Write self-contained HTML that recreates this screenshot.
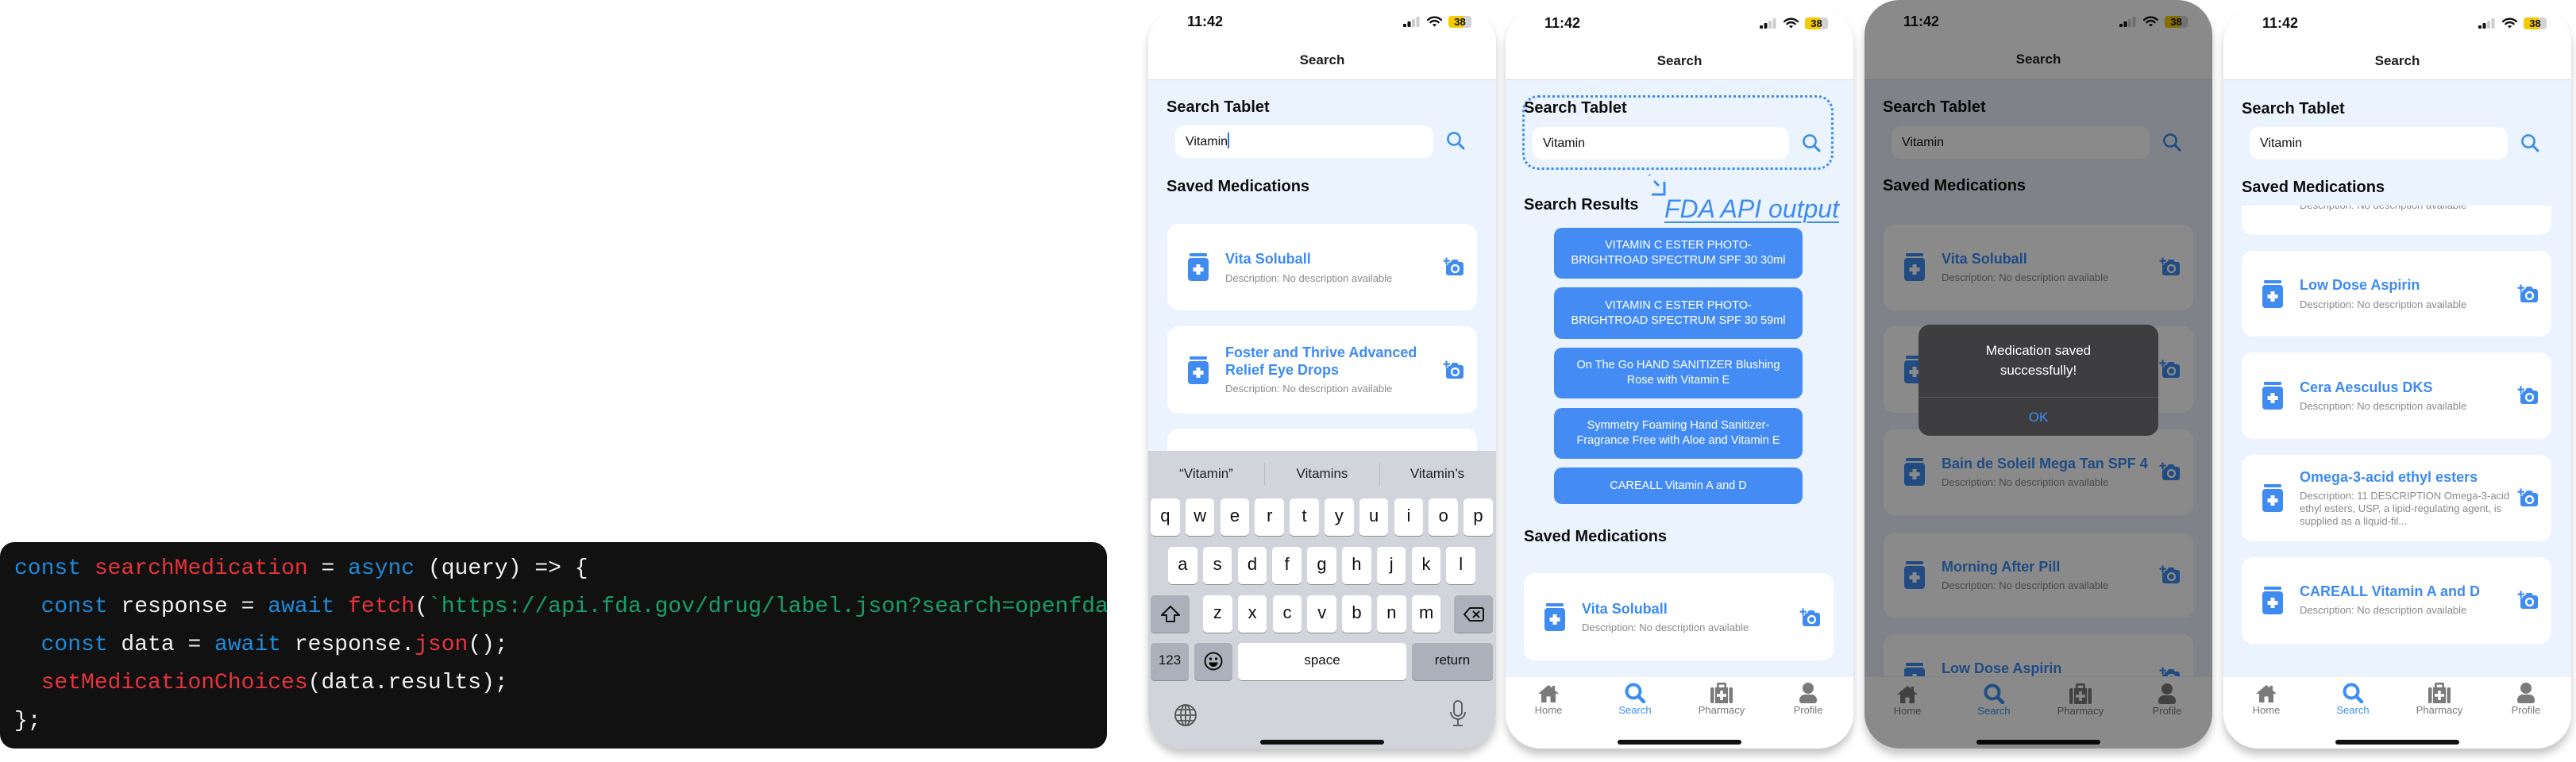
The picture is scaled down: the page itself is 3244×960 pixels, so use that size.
<!DOCTYPE html>
<html><head><meta charset="utf-8"><style>
*{margin:0;padding:0;box-sizing:border-box}
body{width:3244px;height:960px;background:#fff;position:relative;overflow:hidden;font-family:"Liberation Sans",sans-serif}
.code{position:absolute;left:0;top:683px;width:1394px;height:260px;background:#111;border-radius:18px;overflow:hidden;font-family:"Liberation Mono",monospace;font-size:28px;color:#f0f0f0;white-space:pre}
.code div{position:absolute;left:18px;height:48px;line-height:48px}
.k{color:#1f8ad8}.r{color:#e8333d}.g{color:#18a06a}
.ph{position:absolute;top:10px;width:438px;height:933px;border-radius:44px;overflow:hidden;background:#ebf3fe;box-shadow:0 8px 10px rgba(0,0,0,.22)}
.ph>*,.ab>*{position:absolute}
.hdr{left:0;top:0;width:438px;height:91px;background:#fff;border-bottom:1px solid #d9dee6}
.time{left:49px;font-weight:bold;font-size:18px;line-height:20px;color:#111}
.sig{left:321px;width:21px;height:13px}
.wifi{left:351px;width:19px;height:14px}
.bat{left:378px;width:29px;height:15px;border-radius:4px;background:linear-gradient(90deg,#f5cb00 0 66%,#d3d3d3 66%);font-size:13px;font-weight:bold;line-height:15px;text-align:center;color:#111}
.ttl{left:0;width:438px;text-align:center;font-size:17px;font-weight:bold;line-height:20px;color:#1c1c1c}
.h2{left:23px;font-size:20px;font-weight:bold;line-height:24px;color:#0e0e0e}
.inp{left:34px;width:325px;height:41px;background:#fff;border-radius:12px;font-size:16px;line-height:41px;padding-left:13px;color:#111}
.si{width:24px;height:24px;color:#3b8fe8}
.card{left:24px;width:390px;background:#fff;border-radius:14px;overflow:hidden}
.card>*{position:absolute}
.bt{left:26px;width:26px;height:35px;color:#3f8bf0}
.tt{left:73px;font-size:18px;font-weight:bold;line-height:22px;color:#3d8bf0;width:300px}
.ds{left:73px;font-size:13px;line-height:18px;color:#8a8a8a;width:300px}
.cam{left:347px;width:26px;height:23px;color:#3f8bf0}
.tab{left:0;top:842px;width:438px;height:91px;background:#fff;border-top:1px solid #eef0f3}
.ti{width:28px;height:26px;color:#7a7a7a}
.tl{width:100px;text-align:center;font-size:13px;line-height:16px;color:#7a7a7a}
.hi{left:141px;top:922px;width:156px;height:6px;border-radius:3px;background:#111}
.kb{left:0;top:558px;width:438px;height:375px;background:#d1d4da}
.kb>*{position:absolute}
.key{width:36.7px;height:47px;background:#fff;border-radius:5px;box-shadow:0 1px 0 #8d9097;font-size:22px;line-height:44px;text-align:center;color:#111}
.gk{background:#abb0ba;color:#111}
.sug{font-size:17px;line-height:20px;color:#222;text-align:center;width:146px;top:19px}
.sep{width:1px;height:28px;top:15px;background:#b8bbc1}
.rb{left:61px;width:313px;background:#448cf4;border-radius:10px;color:#fff;font-size:14.5px;line-height:19px;text-align:center;display:flex;align-items:center;justify-content:center;padding:0 8px}
</style></head><body>
<svg width="0" height="0" style="position:absolute">
<defs>
<symbol id="bottle" viewBox="0 0 26 35"><rect x="2" y="0" width="22" height="4" rx="1.5" fill="currentColor"/><rect x="0" y="6" width="26" height="29" rx="4" fill="currentColor"/><path d="M13 14v13M6.5 20.5h13" stroke="#fff" stroke-width="5"/></symbol>
<symbol id="cam" viewBox="0 0 26 23"><path d="M7 6h3l2-3h6l2 3h3a3 3 0 0 1 3 3v11a3 3 0 0 1-3 3H7a3 3 0 0 1-3-3V9a3 3 0 0 1 3-3z" fill="currentColor"/><path d="M4.5 0v9.5M0 4.7h9.5" stroke="#fff" stroke-width="4.5"/><path d="M4.5 0.5v8.5M0.5 4.7h8.5" stroke="currentColor" stroke-width="2.2"/><circle cx="15.5" cy="14.5" r="5.6" fill="#fff"/><circle cx="15.5" cy="14.5" r="3.3" fill="currentColor"/></symbol>
<symbol id="srch" viewBox="0 0 24 24"><circle cx="10" cy="10" r="7.6" fill="none" stroke="currentColor" stroke-width="2.6"/><path d="M15.6 15.6L22 22" stroke="currentColor" stroke-width="3" stroke-linecap="round"/></symbol>
<symbol id="tsrch" viewBox="0 0 28 26"><circle cx="12" cy="11" r="8.5" fill="none" stroke="currentColor" stroke-width="4"/><path d="M18.5 17.5L25 24" stroke="currentColor" stroke-width="4.5" stroke-linecap="round"/></symbol>
<symbol id="home" viewBox="0 0 28 26"><path d="M14 3L1 14h4v11h6.5v-7.5h5V25H23V14h4l-5-4.3V4h-3.5v2.7z" fill="currentColor"/></symbol>
<symbol id="kit" viewBox="0 0 28 26"><path d="M10 0h8a2 2 0 0 1 2 2v4h-2.6V2.6h-6.8V6H8V2a2 2 0 0 1 2-2z" fill="currentColor"/><rect x="0" y="6" width="4.5" height="20" rx="2" fill="currentColor"/><rect x="23.5" y="6" width="4.5" height="20" rx="2" fill="currentColor"/><rect x="6" y="6" width="16" height="20" fill="currentColor"/><path d="M14 10v12M8 16h12" stroke="#fff" stroke-width="3.5"/></symbol>
<symbol id="user" viewBox="0 0 28 26"><circle cx="14" cy="7" r="7" fill="currentColor"/><path d="M3 22a7 7 0 0 1 7-7h8a7 7 0 0 1 7 7v1a3 3 0 0 1-3 3H6a3 3 0 0 1-3-3z" fill="currentColor"/></symbol>
<symbol id="sig" viewBox="0 0 21 13"><rect x="0" y="9" width="4" height="4" rx="1" fill="#111"/><rect x="5.5" y="6" width="4" height="7" rx="1" fill="#111"/><rect x="11" y="3" width="4" height="10" rx="1" fill="#ccc"/><rect x="16.5" y="0" width="4" height="13" rx="1" fill="#ccc"/></symbol>
<symbol id="wifi" viewBox="0 0 19 14"><path d="M1.2 5A12 12 0 0 1 17.8 5" fill="none" stroke="#111" stroke-width="2.4" stroke-linecap="round"/><path d="M4.4 8.2A7.3 7.3 0 0 1 14.6 8.2" fill="none" stroke="#111" stroke-width="2.4" stroke-linecap="round"/><path d="M9.5 13.5L7 11a3.6 3.6 0 0 1 5 0z" fill="#111"/></symbol>
</defs></svg>

<div class="code">
<div style="top:10px"><span class="k">const</span> <span class="r">searchMedication</span> = <span class="k">async</span> (query) =&gt; {</div>
<div style="top:58px">  <span class="k">const</span> response = <span class="k">await</span> <span class="r">fetch</span>(<span class="g">`https://api.fda.gov/drug/label.json?search=openfda.brand_name:${query}&amp;limit=5`</span>);</div>
<div style="top:106px">  <span class="k">const</span> data = <span class="k">await</span> response.<span class="r">json</span>();</div>
<div style="top:154px">  <span class="r">setMedicationChoices</span>(data.results);</div>
<div style="top:202px">};</div>
</div>

<!-- PHONE 1 -->
<div class="ph" style="left:1446px">
<div class="hdr"></div>
<div class="time" style="top:7px">11:42</div>
<svg class="sig" style="top:11px"><use href="#sig"/></svg>
<svg class="wifi" style="top:10px"><use href="#wifi"/></svg>
<div class="bat" style="top:10px">38</div>
<div class="ttl" style="top:56px">Search</div>
<div class="h2" style="top:113px">Search Tablet</div>
<div class="inp" style="top:148px">Vitamin<span style="display:inline-block;width:2px;height:20px;background:#2f6cf0;vertical-align:-4px"></span></div>
<svg class="si" style="left:375px;top:155px"><use href="#srch"/></svg>
<div class="h2" style="top:213px">Saved Medications</div>
<div class="card" style="top:272px;height:109px">
<svg class="bt" style="top:37px"><use href="#bottle"/></svg>
<div class="tt" style="top:33px">Vita Soluball</div>
<div class="ds" style="top:60px">Description: No description available</div>
<svg class="cam" style="top:42px"><use href="#cam"/></svg></div>
<div class="card" style="top:401px;height:110px">
<svg class="bt" style="top:38px"><use href="#bottle"/></svg>
<div class="tt" style="top:22px">Foster and Thrive Advanced<br>Relief Eye Drops</div>
<div class="ds" style="top:70px">Description: No description available</div>
<svg class="cam" style="top:43px"><use href="#cam"/></svg></div>
<div class="card" style="top:530px;height:110px"></div>
<div class="kb">
<div class="sug" style="left:0">“Vitamin”</div><div class="sep" style="left:146px"></div>
<div class="sug" style="left:146px">Vitamins</div><div class="sep" style="left:291px"></div>
<div class="sug" style="left:291px">Vitamin’s</div>
<div class="key" style="left:3px;top:60px">q</div><div class="key" style="left:46.8px;top:60px">w</div><div class="key" style="left:90.6px;top:60px">e</div><div class="key" style="left:134.4px;top:60px">r</div><div class="key" style="left:178.2px;top:60px">t</div><div class="key" style="left:222px;top:60px">y</div><div class="key" style="left:265.8px;top:60px">u</div><div class="key" style="left:309.6px;top:60px">i</div><div class="key" style="left:353.4px;top:60px">o</div><div class="key" style="left:397.2px;top:60px">p</div>
<div class="key" style="left:25px;top:121px">a</div><div class="key" style="left:68.8px;top:121px">s</div><div class="key" style="left:112.6px;top:121px">d</div><div class="key" style="left:156.4px;top:121px">f</div><div class="key" style="left:200.2px;top:121px">g</div><div class="key" style="left:244px;top:121px">h</div><div class="key" style="left:287.8px;top:121px">j</div><div class="key" style="left:331.6px;top:121px">k</div><div class="key" style="left:375.4px;top:121px">l</div>
<div class="key gk" style="left:3px;top:182px;width:49px"><svg width="26" height="24" viewBox="0 0 26 24" style="margin-top:12px"><path d="M13 2L2 13h6v8h10v-8h6z" fill="none" stroke="#111" stroke-width="2" stroke-linejoin="round"/></svg></div>
<div class="key" style="left:69px;top:182px">z</div><div class="key" style="left:112.8px;top:182px">x</div><div class="key" style="left:156.6px;top:182px">c</div><div class="key" style="left:200.4px;top:182px">v</div><div class="key" style="left:244.2px;top:182px">b</div><div class="key" style="left:288px;top:182px">n</div><div class="key" style="left:331.8px;top:182px">m</div>
<div class="key gk" style="left:385px;top:182px;width:49px"><svg width="26" height="20" viewBox="0 0 26 20" style="margin-top:14px"><path d="M8 2h15a2 2 0 0 1 2 2v12a2 2 0 0 1-2 2H8L1 10z" fill="none" stroke="#111" stroke-width="2" stroke-linejoin="round"/><path d="M12 6l8 8M20 6l-8 8" stroke="#111" stroke-width="2"/></svg></div>
<div class="key gk" style="left:3px;top:242px;width:48px;font-size:17px">123</div>
<div class="key gk" style="left:58px;top:242px;width:48px"><svg width="24" height="24" viewBox="0 0 24 24" style="margin-top:11px"><circle cx="12" cy="12" r="10.5" fill="none" stroke="#111" stroke-width="2"/><circle cx="8.5" cy="9" r="1.6"/><circle cx="15.5" cy="9" r="1.6"/><path d="M6.5 13.5h11a5.5 5.5 0 0 1-11 0z"/></svg></div>
<div class="key" style="left:113px;top:242px;width:212px;font-size:17px">space</div>
<div class="key gk" style="left:332px;top:242px;width:102px;font-size:17px">return</div>
<svg style="left:32px;top:318px" width="30" height="30" viewBox="0 0 30 30"><g fill="none" stroke="#555" stroke-width="1.8"><circle cx="15" cy="15" r="13"/><ellipse cx="15" cy="15" rx="6" ry="13"/><path d="M15 2v26M2 15h26M4 8h22M4 22h22"/></g></svg>
<svg style="left:379px;top:314px" width="22" height="34" viewBox="0 0 22 34"><g fill="none" stroke="#555" stroke-width="1.8"><rect x="6" y="1" width="10" height="19" rx="5"/><path d="M2 15a9 9 0 0 0 18 0M11 24v7M5 32h12"/></g></svg>
</div>
<div class="hi"></div>
</div>

<!-- PHONE 2 -->
<div class="ph" style="left:1896px">
<div class="hdr"></div>
<div class="time" style="top:9px">11:42</div>
<svg class="sig" style="top:13px;left:320px"><use href="#sig"/></svg>
<svg class="wifi" style="top:12px;left:350px"><use href="#wifi"/></svg>
<div class="bat" style="top:12px;left:377px">38</div>
<div class="ttl" style="top:57px">Search</div>
<div style="left:21px;top:110px;width:392px;height:94px;border:3.5px dotted #3f8cf0;border-radius:20px"></div>
<div class="h2" style="top:114px">Search Tablet</div>
<div class="inp" style="top:150px;width:323px">Vitamin</div>
<svg class="si" style="left:373px;top:158px"><use href="#srch"/></svg>
<svg style="left:178px;top:207px" width="26" height="32" viewBox="0 0 26 32"><path d="M3 3l1 1M9 11l6 6" stroke="#3f8cf0" stroke-width="3"/><path d="M22 12v16H6" fill="none" stroke="#3f8cf0" stroke-width="3"/></svg>
<div class="h2" style="top:236px">Search Results</div>
<div style="left:200px;top:234px;font-size:32px;font-style:italic;line-height:38px;color:#3f8cf0;text-decoration:underline;text-decoration-thickness:2px;text-underline-offset:5px">FDA API output</div>
<div class="rb" style="top:277px;height:64px">VITAMIN C ESTER PHOTO-<br>BRIGHTROAD SPECTRUM SPF 30 30ml</div>
<div class="rb" style="top:352px;height:65px">VITAMIN C ESTER PHOTO-<br>BRIGHTROAD SPECTRUM SPF 30 59ml</div>
<div class="rb" style="top:428px;height:64px">On The Go HAND SANITIZER Blushing<br>Rose with Vitamin E</div>
<div class="rb" style="top:504px;height:64px">Symmetry Foaming Hand Sanitizer-<br>Fragrance Free with Aloe and Vitamin E</div>
<div class="rb" style="top:579px;height:46px">CAREALL Vitamin A and D</div>
<div class="h2" style="top:654px">Saved Medications</div>
<div class="card" style="top:712px;height:110px;left:23px">
<svg class="bt" style="top:38px"><use href="#bottle"/></svg>
<div class="tt" style="top:34px">Vita Soluball</div>
<div class="ds" style="top:60px">Description: No description available</div>
<svg class="cam" style="top:44px"><use href="#cam"/></svg></div>
<div class="tab"></div>
<svg class="ti" style="left:40px;top:850px"><use href="#home"/></svg>
<svg class="ti" style="left:149px;top:850px;color:#3b8ff0"><use href="#tsrch"/></svg>
<svg class="ti" style="left:258px;top:850px"><use href="#kit"/></svg>
<svg class="ti" style="left:367px;top:850px"><use href="#user"/></svg>
<div class="tl" style="left:4px;top:877px">Home</div>
<div class="tl" style="left:113px;top:877px;color:#3b8ff0">Search</div>
<div class="tl" style="left:222px;top:877px">Pharmacy</div>
<div class="tl" style="left:331px;top:877px">Profile</div>
<div class="hi"></div>
</div>

<!-- PHONE 3 -->
<div class="ph" style="left:2348px;top:0;height:943px">
<div class="ab" style="position:absolute;left:0;top:10px;width:438px;height:933px">
<div class="hdr" style="top:-10px;height:101px"></div>
<div class="time" style="top:7px">11:42</div>
<svg class="sig" style="top:11px"><use href="#sig"/></svg>
<svg class="wifi" style="top:10px"><use href="#wifi"/></svg>
<div class="bat" style="top:10px">38</div>
<div class="ttl" style="top:55px">Search</div>
<div class="h2" style="top:113px">Search Tablet</div>
<div class="inp" style="top:149px">Vitamin</div>
<svg class="si" style="left:375px;top:157px"><use href="#srch"/></svg>
<div class="h2" style="top:212px">Saved Medications</div>
<div class="card" style="top:273px;height:108px">
<svg class="bt" style="top:36px"><use href="#bottle"/></svg>
<div class="tt" style="top:32px">Vita Soluball</div>
<div class="ds" style="top:58px">Description: No description available</div>
<svg class="cam" style="top:41px"><use href="#cam"/></svg></div>
<div class="card" style="top:401px;height:109px">
<svg class="bt" style="top:37px"><use href="#bottle"/></svg>
<div class="tt" style="top:33px">Foster and Thrive</div>
<svg class="cam" style="top:42px"><use href="#cam"/></svg></div>
<div class="card" style="top:531px;height:108px">
<svg class="bt" style="top:36px"><use href="#bottle"/></svg>
<div class="tt" style="top:32px;width:320px">Bain de Soleil Mega Tan SPF 4</div>
<div class="ds" style="top:58px">Description: No description available</div>
<svg class="cam" style="top:41px"><use href="#cam"/></svg></div>
<div class="card" style="top:661px;height:107px">
<svg class="bt" style="top:36px"><use href="#bottle"/></svg>
<div class="tt" style="top:32px">Morning After Pill</div>
<div class="ds" style="top:58px">Description: No description available</div>
<svg class="cam" style="top:41px"><use href="#cam"/></svg></div>
<div class="card" style="top:789px;height:108px">
<svg class="bt" style="top:36px"><use href="#bottle"/></svg>
<div class="tt" style="top:32px">Low Dose Aspirin</div>
<svg class="cam" style="top:41px"><use href="#cam"/></svg></div>
<div class="tab"></div>
<svg class="ti" style="left:40px;top:851px"><use href="#home"/></svg>
<svg class="ti" style="left:149px;top:851px;color:#3b8ff0"><use href="#tsrch"/></svg>
<svg class="ti" style="left:258px;top:851px"><use href="#kit"/></svg>
<svg class="ti" style="left:367px;top:851px"><use href="#user"/></svg>
<div class="tl" style="left:4px;top:878px">Home</div>
<div class="tl" style="left:113px;top:878px;color:#3b8ff0">Search</div>
<div class="tl" style="left:222px;top:878px">Pharmacy</div>
<div class="tl" style="left:331px;top:878px">Profile</div>
<div class="hi"></div>
</div>
<div style="left:0;top:0;width:438px;height:943px;background:rgba(0,0,0,.46)"></div>
<div style="left:68px;top:409px;width:302px;height:140px;background:#3e3e40;border-radius:14px">
<div style="position:absolute;left:0;top:20px;width:302px;text-align:center;color:#fff;font-size:17px;line-height:25px">Medication saved<br>successfully!</div>
<div style="position:absolute;left:0;top:91px;width:302px;height:1px;background:#555"></div>
<div style="position:absolute;left:0;top:106px;width:302px;text-align:center;color:#3d8ff2;font-size:17px;line-height:22px">OK</div>
</div>
</div>

<!-- PHONE 4 -->
<div class="ph" style="left:2800px">
<div class="hdr"></div>
<div class="time" style="top:9px">11:42</div>
<svg class="sig" style="top:13px"><use href="#sig"/></svg>
<svg class="wifi" style="top:12px"><use href="#wifi"/></svg>
<div class="bat" style="top:12px">38</div>
<div class="ttl" style="top:57px">Search</div>
<div class="h2" style="top:115px">Search Tablet</div>
<div class="inp" style="top:150px;left:33px">Vitamin</div>
<svg class="si" style="left:374px;top:158px"><use href="#srch"/></svg>
<div class="h2" style="top:214px">Saved Medications</div>
<div style="left:0;top:249px;width:438px;height:593px;overflow:hidden">
<div class="card" style="position:absolute;left:23px;top:-72px;height:109px">
<div class="ds" style="top:63px">Description: No description available</div></div>
<div class="card" style="position:absolute;left:23px;top:57px;height:108px">
<svg class="bt" style="top:37px"><use href="#bottle"/></svg>
<div class="tt" style="top:32px">Low Dose Aspirin</div>
<div class="ds" style="top:59px">Description: No description available</div>
<svg class="cam" style="top:42px"><use href="#cam"/></svg></div>
<div class="card" style="position:absolute;left:23px;top:185px;height:109px">
<svg class="bt" style="top:37px"><use href="#bottle"/></svg>
<div class="tt" style="top:33px">Cera Aesculus DKS</div>
<div class="ds" style="top:59px">Description: No description available</div>
<svg class="cam" style="top:42px"><use href="#cam"/></svg></div>
<div class="card" style="position:absolute;left:23px;top:314px;height:109px">
<svg class="bt" style="top:37px"><use href="#bottle"/></svg>
<div class="tt" style="top:17px">Omega-3-acid ethyl esters</div>
<div class="ds" style="top:44px;line-height:16px;width:265px">Description: 11 DESCRIPTION Omega-3-acid ethyl esters, USP, a lipid-regulating agent, is supplied as a liquid-fil...</div>
<svg class="cam" style="top:42px"><use href="#cam"/></svg></div>
<div class="card" style="position:absolute;left:23px;top:443px;height:109px">
<svg class="bt" style="top:37px"><use href="#bottle"/></svg>
<div class="tt" style="top:32px">CAREALL Vitamin A and D</div>
<div class="ds" style="top:58px">Description: No description available</div>
<svg class="cam" style="top:42px"><use href="#cam"/></svg></div>
</div>
<div class="tab"></div>
<svg class="ti" style="left:40px;top:850px"><use href="#home"/></svg>
<svg class="ti" style="left:149px;top:850px;color:#3b8ff0"><use href="#tsrch"/></svg>
<svg class="ti" style="left:258px;top:850px"><use href="#kit"/></svg>
<svg class="ti" style="left:367px;top:850px"><use href="#user"/></svg>
<div class="tl" style="left:4px;top:877px">Home</div>
<div class="tl" style="left:113px;top:877px;color:#3b8ff0">Search</div>
<div class="tl" style="left:222px;top:877px">Pharmacy</div>
<div class="tl" style="left:331px;top:877px">Profile</div>
<div class="hi"></div>
</div>
</body></html>
